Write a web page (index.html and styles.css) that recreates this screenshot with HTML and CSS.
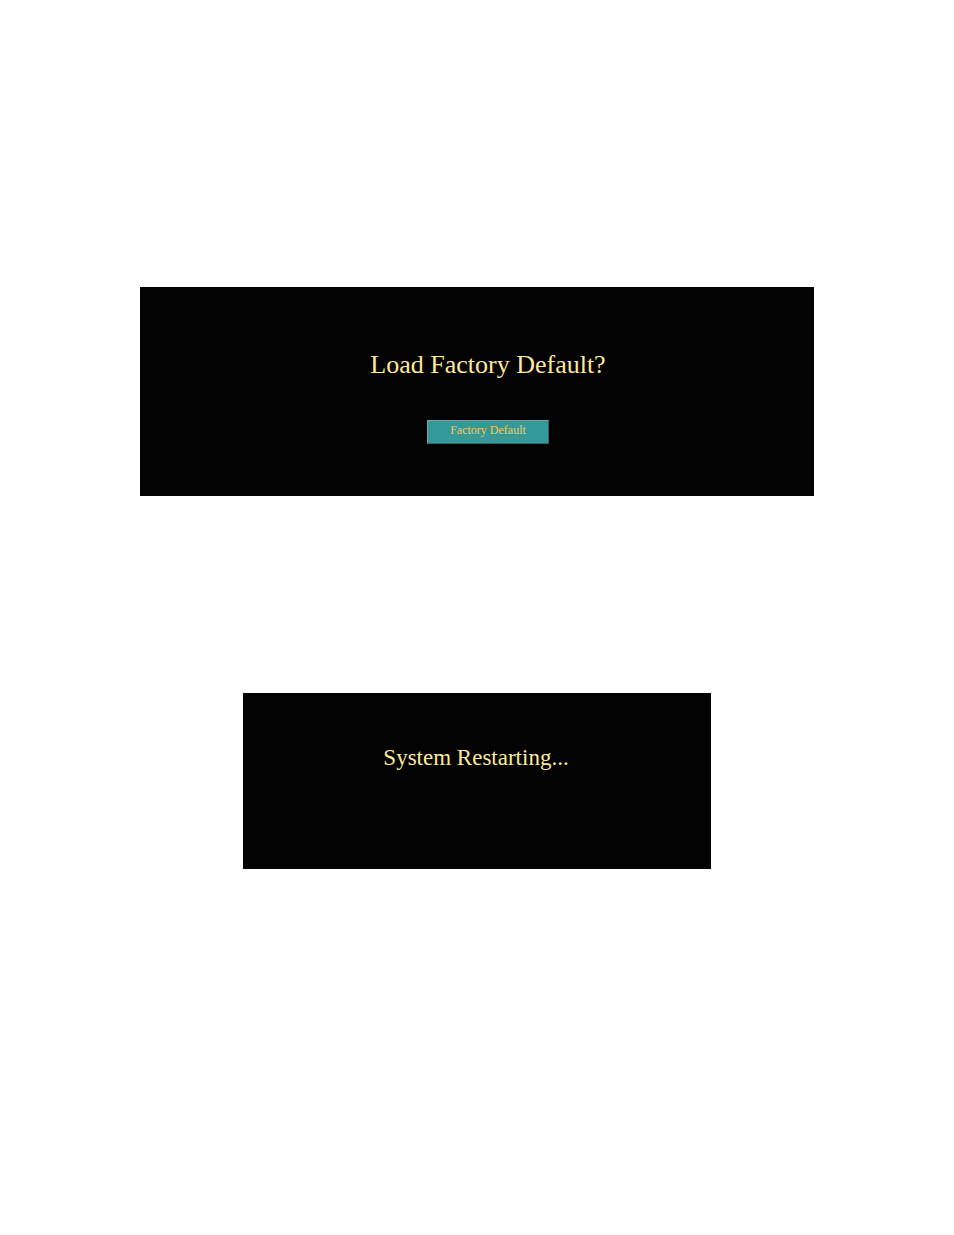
FILE: index.html
```html
<!DOCTYPE html>
<html lang="en">
<head>
<meta charset="utf-8">
<meta name="viewport" content="width=device-width, initial-scale=1">
<title>Factory Default</title>
<link rel="stylesheet" href="styles.css">
</head>
<body>
<main class="page">
  <section class="panel panel-confirm">
    <h1 class="heading">Load Factory Default?</h1>
    <button class="action" type="button">Factory Default</button>
  </section>
  <section class="panel panel-status">
    <p class="status" role="status">System Restarting...</p>
  </section>
</main>
</body>
</html>
```

FILE: styles.css
```css
body {
  margin: 0;
  background: #fff;
  font-family: "Liberation Serif", "Times New Roman", serif;
}

.page {
  display: flex;
  flex-direction: column;
  align-items: center;
  gap: 197px;
  padding: 287px 140px;
}

.panel {
  box-sizing: border-box;
  display: flex;
  flex-direction: column;
  align-items: center;
  background: #030303;
  color: #fee79c;
}

.panel-confirm {
  width: 100%;
  gap: 40px;
  padding: 63px 0 52px 22px;
}

.panel-status {
  width: 100%;
  max-width: 468px;
  padding: 50px 2px 96px 0;
}

.heading {
  margin: 0;
  font-size: 26px;
  font-weight: 400;
  line-height: 30px;
}

.status {
  margin: 0;
  font-size: 23px;
  line-height: 30px;
}

.action {
  min-width: 122px;
  padding: 1px 20px 5px;
  border: 1px solid;
  border-color: #6fa5a5 #4b5c5e #4b5c5e #6fa5a5;
  border-radius: 0;
  background: #339a99;
  color: #f3c862;
  font-family: inherit;
  font-size: 12px;
  line-height: 16px;
}
```
